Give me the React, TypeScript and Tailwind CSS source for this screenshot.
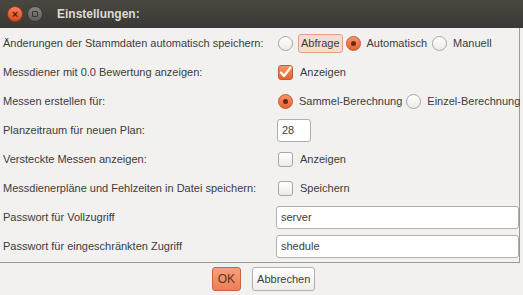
import React from 'react';

const Radio: React.FC<{ checked?: boolean }> = ({ checked }) => (
  <span
    className={
      'flex items-center justify-center w-[15px] h-[15px] rounded-full border shrink-0 ' +
      (checked
        ? 'border-[#c9582b] bg-gradient-to-b from-[#f7956a] to-[#e1622f]'
        : 'border-[#a9a69f] bg-gradient-to-b from-white to-[#ecebe9]')
    }
  >
    {checked && <span className="w-[5px] h-[5px] rounded-full bg-[#6b2a12]" />}
  </span>
);

const Check: React.FC<{ checked?: boolean }> = ({ checked }) => (
  <span
    className={
      'flex items-center justify-center w-[15px] h-[15px] rounded-[3px] border shrink-0 ' +
      (checked
        ? 'border-[#c9582b] bg-gradient-to-b from-[#f7956a] to-[#e1622f]'
        : 'border-[#a9a69f] bg-gradient-to-b from-white to-[#ecebe9]')
    }
  >
    {checked && (
      <svg width="13" height="13" viewBox="0 0 13 13">
        <path d="M2 6.5 L5 10 L11.5 1.5" fill="none" stroke="#fff" strokeWidth="2.2" strokeLinecap="round" strokeLinejoin="round" />
      </svg>
    )}
  </span>
);

const Row: React.FC<{ label: string; children: React.ReactNode }> = ({ label, children }) => (
  <div className="flex items-center h-[29px] whitespace-nowrap">
    <div className="w-[278px] shrink-0 pl-[3px]">{label}</div>
    <div className="flex items-center flex-1 min-w-0">{children}</div>
  </div>
);

export default function App() {
  return (
    <div
      className="w-[523px] h-[295px] flex flex-col bg-[#f2f1f0] text-[#3c3c3c] text-[11px] overflow-hidden"
      style={{ fontFamily: '"Liberation Sans", Arial, sans-serif' }}
    >
      <div className="h-[28px] shrink-0 flex items-center bg-gradient-to-b from-[#48473f] to-[#3a3935] px-[7px]">
        <span className="flex items-center justify-center w-[16px] h-[16px] rounded-full bg-gradient-to-b from-[#f7825a] to-[#d9481e] border border-[#8f3a1d] text-[#5a1d08] text-[11px] leading-none font-bold">
          ×
        </span>
        <span className="ml-[4px] flex items-center justify-center w-[16px] h-[16px] rounded-full bg-gradient-to-b from-[#87857f] to-[#5f5e59] border border-[#3a3935]">
          <span className="w-[6px] h-[6px] border border-[#36352f] rounded-[1px]" />
        </span>
        <span className="ml-[14px] text-[12px] font-bold text-[#dfdbd2]">Einstellungen:</span>
      </div>

      <div className="mr-[3px] border-r border-b border-[#9c9a95] pt-[1px] pb-[1px]">
        <Row label="Änderungen der Stammdaten automatisch speichern:">
          <Radio />
          <span className="ml-[5px] px-[2px] h-[19px] flex items-center rounded-[3px] border border-[#e3a184] bg-[#f6dccf]">Abfrage</span>
          <span className="ml-[3px]"><Radio checked /></span>
          <span className="ml-[6px]">Automatisch</span>
          <span className="ml-[5px]"><Radio /></span>
          <span className="ml-[6px]">Manuell</span>
        </Row>
        <Row label="Messdiener mit 0.0 Bewertung anzeigen:">
          <Check checked />
          <span className="ml-[7px]">Anzeigen</span>
        </Row>
        <Row label="Messen erstellen für:">
          <Radio checked />
          <span className="ml-[6px]">Sammel-Berechnung</span>
          <span className="ml-[4px]"><Radio /></span>
          <span className="ml-[6px]">Einzel-Berechnung</span>
        </Row>
        <Row label="Planzeitraum für neuen Plan:">
          <div className="-ml-[1px] w-[34px] h-[23px] flex items-center px-[4px] bg-white border border-[#b2afa9] rounded-[3px]">28</div>
        </Row>
        <Row label="Versteckte Messen anzeigen:">
          <Check />
          <span className="ml-[7px]">Anzeigen</span>
        </Row>
        <Row label="Messdienerpläne und Fehlzeiten in Datei speichern:">
          <Check />
          <span className="ml-[7px]">Speichern</span>
        </Row>
        <Row label="Passwort für Vollzugriff">
          <div className="-ml-[2px] flex-1 h-[23px] flex items-center px-[4px] bg-white border border-[#b2afa9] rounded-[3px]">server</div>
        </Row>
        <Row label="Passwort für eingeschränkten Zugriff">
          <div className="-ml-[2px] flex-1 h-[23px] flex items-center px-[4px] bg-white border border-[#b2afa9] rounded-[3px]">shedule</div>
        </Row>
      </div>

      <div className="flex-1 flex items-center justify-center gap-[11px] pl-[4px]">
        <button className="h-[24px] px-[5px] rounded-[3px] border border-[#c9663f] bg-gradient-to-b from-[#f6a07c] to-[#ec7f55] text-[#5b3425] text-[12px]">
          OK
        </button>
        <button className="h-[24px] px-[4px] rounded-[3px] border border-[#b2afa9] bg-gradient-to-b from-white to-[#efeeec] text-[#3c3c3c] text-[11px]">
          Abbrechen
        </button>
      </div>
    </div>
  );
}
